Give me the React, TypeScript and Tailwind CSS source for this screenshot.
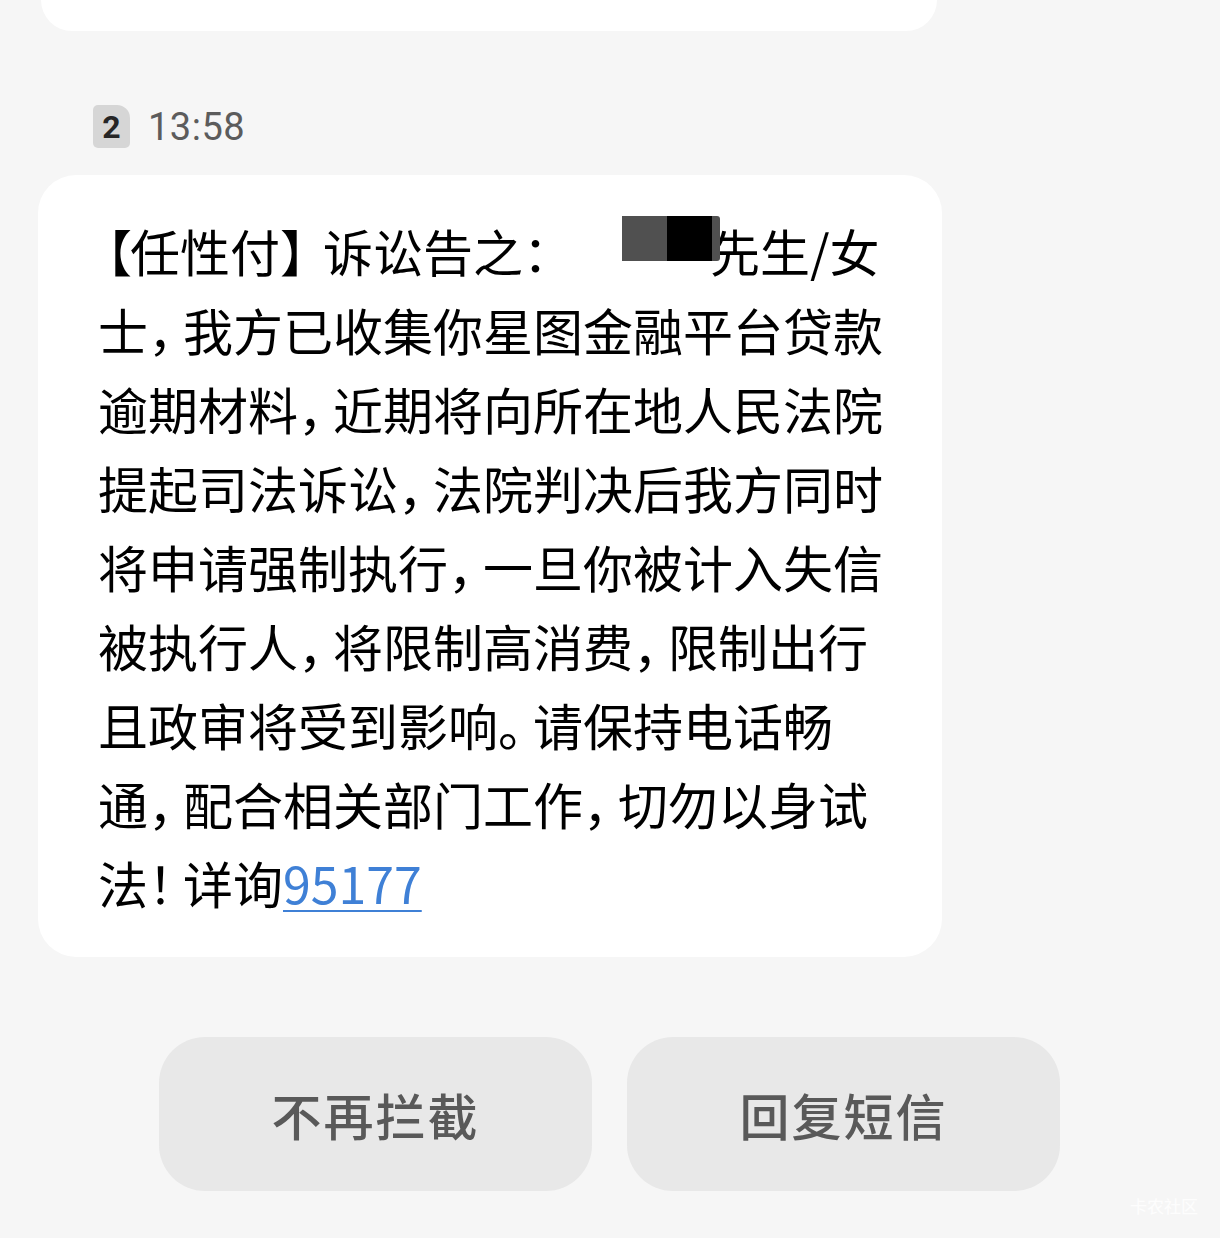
const cjk = { fontFamily: '"Noto Sans CJK SC", "Noto Sans", sans-serif' };

// Narrow the full-width punctuation, as the phone's font does
function Text({ s }: { s: string }) {
  return (
    <>
      {Array.from(s).map((ch, i) => {
        if (ch === "，" || ch === "。" || ch === "！")
          return (
            <span key={i} className="tracking-[-15px]">
              {ch}
            </span>
          );
        if (ch === "：")
          return (
            <span key={i} className="tracking-[-10px]">
              {ch}
            </span>
          );
        if (ch === "【")
          return (
            <span key={i} className="ml-[-16px] mr-[-2px]">
              {ch}
            </span>
          );
        if (ch === "】")
          return (
            <span key={i} className="tracking-[-7px]">
              {ch}
            </span>
          );
        return <span key={i}>{ch}</span>;
      })}
    </>
  );
}

function SimBadge() {
  return (
    <div
      className="flex h-[43px] w-[37px] items-center justify-center rounded-[5px] rounded-tr-[13px] bg-[#d6d6d6] text-[32px] font-bold text-[#262626]"
      style={{ fontFamily: 'Roboto, "Liberation Sans", sans-serif' }}
    >
      2
    </div>
  );
}

function Redacted() {
  return (
    <span className="mr-[-10px] inline-flex w-[157px] translate-y-[-20px] pl-[59px] align-middle">
      <span className="h-[45px] w-[45px] bg-[#505050]" />
      <span className="h-[45px] w-[45px] bg-black" />
      <span className="h-[45px] w-[8px] rounded-r-[3px] bg-[#505050]" />
    </span>
  );
}

export default function App() {
  const lines = [
    "士，我方已收集你星图金融平台贷款",
    "逾期材料，近期将向所在地人民法院",
    "提起司法诉讼，法院判决后我方同时",
    "将申请强制执行，一旦你被计入失信",
    "被执行人，将限制高消费，限制出行",
    "且政审将受到影响。请保持电话畅",
    "通，配合相关部门工作，切勿以身试",
  ];

  return (
    <div className="relative h-[1238px] w-[1220px] overflow-hidden bg-[#f6f6f6]" style={cjk}>
      {/* tail of previous message */}
      <div className="ml-[41px] h-[31px] w-[896px] rounded-b-[38px] bg-white" />

      {/* sim + time */}
      <div className="ml-[93px] mt-[74px] flex items-center gap-[18px]">
        <SimBadge />
        <span
          className="text-[38px] leading-none tracking-[0.5px] text-[#5c5c5c]"
          style={{ fontFamily: 'Roboto, "Liberation Sans", sans-serif' }}
        >
          13:58
        </span>
      </div>

      {/* message bubble */}
      <div className="ml-[38px] mt-[27px] h-[782px] w-[904px] rounded-[38px] bg-white pl-[60px] pt-[36px]">
        <div className="text-[50px] font-normal leading-[79px] text-black">
          <div className="whitespace-nowrap">
            <Text s="【任性付】诉讼告之：" />
            <Redacted />
            先生/女
          </div>
          {lines.map((l) => (
            <div key={l} className="whitespace-nowrap">
              <Text s={l} />
            </div>
          ))}
          <div className="whitespace-nowrap">
            <Text s="法！详询" />
            <span className="text-[#3f80d6] underline decoration-[2px] underline-offset-[6px]">95177</span>
          </div>
        </div>
      </div>

      {/* actions */}
      <div className="ml-[159px] mt-[80px] flex gap-[35px]">
        <button className="flex h-[154px] w-[433px] items-center justify-center rounded-[46px] bg-[#e8e8e8] text-[50px] font-medium tracking-[2px] text-[#595959]">
          不再拦截
        </button>
        <button className="flex h-[154px] w-[433px] items-center justify-center rounded-[46px] bg-[#e8e8e8] text-[50px] font-medium tracking-[2px] text-[#595959]">
          回复短信
        </button>
      </div>

      {/* watermark */}
      <div className="absolute bottom-[20px] right-[22px] text-[17px] text-white/80">卡农社区</div>
    </div>
  );
}
